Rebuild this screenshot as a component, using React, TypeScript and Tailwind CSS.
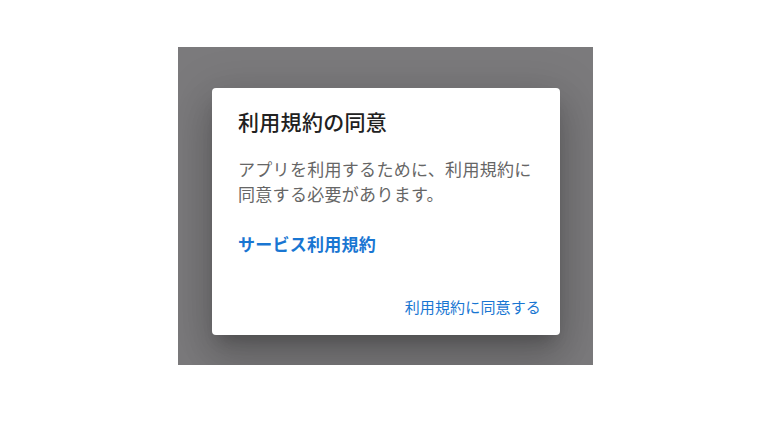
import React from 'react';

const FONT = '"Noto Sans CJK JP", "Noto Sans", Roboto, sans-serif';

const TermsDialog: React.FC = () => {
  return (
    <div
      className="w-[348px] h-[247px] bg-white rounded-[4px] shadow-[0_11px_15px_-7px_rgba(0,0,0,0.2),0_24px_38px_3px_rgba(0,0,0,0.14),0_9px_46px_8px_rgba(0,0,0,0.12)] flex flex-col"
    >
      {/* Title */}
      <h2 className="pt-[19px] px-[26px] text-[21px] leading-[28px] tracking-[0.3px] font-medium text-[#212121]">
        利用規約の同意
      </h2>

      {/* Body */}
      <div className="pt-[21px] px-[26px] flex flex-col">
        <p className="text-[17px] leading-[25px] tracking-[0.3px] text-[#666666]">
          アプリを利用するために、利用規約に同意する必要があります。
        </p>
        <a className="mt-[26px] text-[17px] leading-[24px] tracking-[0.25px] font-bold text-[#1976d2]">
          サービス利用規約
        </a>
      </div>

      {/* Actions */}
      <div className="mt-auto flex justify-end pr-[11px] pb-[10px]">
        <button className="h-[36px] px-[8px] text-[15px] leading-[36px] tracking-[0.15px] text-[#1976d2]">
          利用規約に同意する
        </button>
      </div>
    </div>
  );
};

export default function App() {
  return (
    <div className="w-[763px] h-[448px] bg-white pl-[178px] pt-[47px]" style={{ fontFamily: FONT }}>
      <div className="w-[415px] h-[318px] bg-[#7b7a7c] pl-[34px] pt-[41px] overflow-hidden">
        <TermsDialog />
      </div>
    </div>
  );
}
